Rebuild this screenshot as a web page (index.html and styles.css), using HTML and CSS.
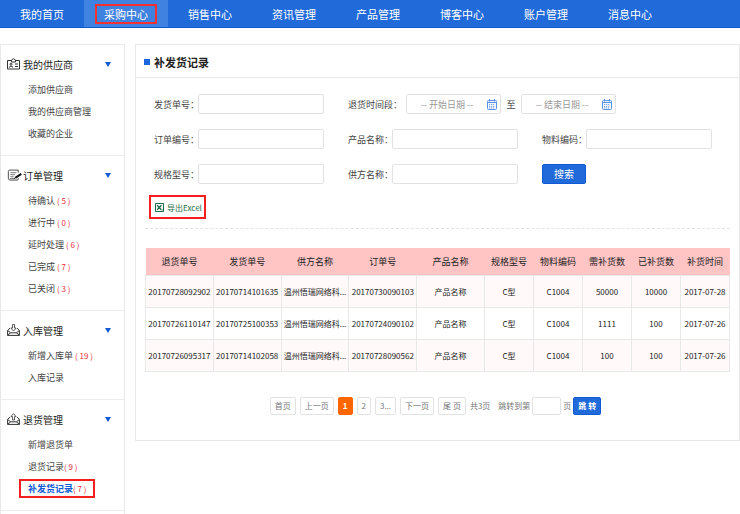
FILE: index.html
```
<!DOCTYPE html>
<html lang="zh-CN">
<head>
    <meta charset="UTF-8">
    <meta name="viewport" content="width=device-width, initial-scale=1.0">
    <title>补发货记录</title>
    <link rel="stylesheet" href="styles.css">
</head>
<body>
    <!-- Shared icons -->
    <svg class="sprite" aria-hidden="true">
        <symbol id="icon-calendar" viewBox="0 0 10 11">
            <rect x="0.5" y="1.5" width="9" height="9" rx="1" fill="#f3f8fe" stroke="#5b93e4"/>
            <path d="M0.5 3.5h9M2.5 0v2.5M7.5 0v2.5" stroke="#5b93e4" fill="none"/>
            <path d="M2 5.5h6M2 7.5h6M2 9h6" stroke="#5b93e4" stroke-width="0.8" stroke-dasharray="1.2 0.8" fill="none"/>
        </symbol>
    </svg>

    <nav class="top-nav">
        <a href="#">我的首页</a>
        <a href="#" class="active"><span class="mark">采购中心</span></a>
        <a href="#">销售中心</a>
        <a href="#">资讯管理</a>
        <a href="#">产品管理</a>
        <a href="#">博客中心</a>
        <a href="#">账户管理</a>
        <a href="#">消息中心</a>
    </nav>

    <div class="page">
        <!-- Left menu -->
        <aside class="sidebar">
            <section>
                <h3>
                    <svg class="menu-icon" viewBox="0 0 13 12" fill="none" stroke="#333">
                        <path d="M4 2.5H0.5v8.5h12V2.5H9"/>
                        <path d="M4.5 4V2L6.5 0.7 8.5 2v2z"/>
                        <circle cx="4" cy="6.2" r="1"/>
                        <path d="M2.3 9.5V8.8q1.7-1.4 3.4 0v0.7M8 6h3M8 8.5h3"/>
                    </svg>
                    我的供应商<i class="arrow"></i>
                </h3>
                <ul>
                    <li><a href="#">添加供应商</a></li>
                    <li><a href="#">我的供应商管理</a></li>
                    <li><a href="#">收藏的企业</a></li>
                </ul>
            </section>
            <section>
                <h3>
                    <svg class="menu-icon wide" viewBox="0 0 16 13" fill="none" stroke="#444">
                        <path d="M11.5 4V1.2H2.2Q0.8 1.2 0.8 2.6V10q0 2 2 2h7.5q1.2 0 1.2-1.2V10"/>
                        <path d="M3 4h6.5M3 6.2h5M3 8.4h3.5M2.5 10.4h5" stroke-width="0.8"/>
                        <path d="M8.3 9.6L14.8 5.2" stroke="#111" stroke-width="2.2"/>
                        <path d="M6.8 10.6l2-1.6" stroke="#111"/>
                    </svg>
                    订单管理<i class="arrow"></i>
                </h3>
                <ul>
                    <li><a href="#">待确认 <em>( 5 )</em></a></li>
                    <li><a href="#">进行中 <em>( 0 )</em></a></li>
                    <li><a href="#">延时处理 <em>( 6 )</em></a></li>
                    <li><a href="#">已完成 <em>( 7 )</em></a></li>
                    <li><a href="#">已关闭 <em>( 3 )</em></a></li>
                </ul>
            </section>
            <section>
                <h3>
                    <svg class="menu-icon" viewBox="0 0 13 12" fill="none" stroke="#333">
                        <path d="M3 4L0.6 6.5v4.9h11.8V6.5L10 4M0.6 6.5L3.6 8.8h5.8l3-2.3M0.6 11.2l3-2.4M12.4 11.2l-3-2.4"/>
                        <path d="M5.5 0.6h2v3.4h1.6L6.5 7 3.9 4h1.6z" stroke-width="0.8"/>
                    </svg>
                    入库管理<i class="arrow"></i>
                </h3>
                <ul>
                    <li><a href="#">新增入库单 <em>( 19 )</em></a></li>
                    <li><a href="#">入库记录</a></li>
                </ul>
            </section>
            <section>
                <h3>
                    <svg class="menu-icon" viewBox="0 0 13 12" fill="none" stroke="#333">
                        <path d="M3 4L0.6 6.5v4.9h11.8V6.5L10 4M0.6 6.5L3.6 8.8h5.8l3-2.3M0.6 11.2l3-2.4M12.4 11.2l-3-2.4"/>
                        <path d="M5.5 7h2V3.6h1.6L6.5 0.6 3.9 3.6h1.6z" stroke-width="0.8"/>
                    </svg>
                    退货管理<i class="arrow"></i>
                </h3>
                <ul>
                    <li><a href="#">新增退货单</a></li>
                    <li><a href="#">退货记录<em>( 9 )</em></a></li>
                    <li><a href="#" class="current">补发货记录<em>( 7 )</em></a></li>
                </ul>
            </section>
        </aside>

        <main class="content">
            <h1>补发货记录</h1>

            <!-- Search form -->
            <form class="search">
                <div class="field">
                    <label for="shipNo">发货单号：</label>
                    <input type="text" id="shipNo">
                </div>
                <div class="field dates">
                    <label for="dateStart">退货时间段：</label>
                    <div class="date">
                        <input type="text" id="dateStart" placeholder="-- 开始日期 --">
                        <svg><use href="#icon-calendar"/></svg>
                    </div>
                    <label for="dateEnd" class="to">至</label>
                    <div class="date">
                        <input type="text" id="dateEnd" placeholder="-- 结束日期 --">
                        <svg><use href="#icon-calendar"/></svg>
                    </div>
                </div>
                <div class="field">
                    <label for="orderNo">订单编号：</label>
                    <input type="text" id="orderNo">
                </div>
                <div class="field">
                    <label for="product">产品名称：</label>
                    <input type="text" id="product">
                </div>
                <div class="field">
                    <label for="material">物料编码：</label>
                    <input type="text" id="material">
                </div>
                <div class="field">
                    <label for="spec">规格型号：</label>
                    <input type="text" id="spec">
                </div>
                <div class="field">
                    <label for="supplier">供方名称：</label>
                    <input type="text" id="supplier">
                </div>
                <div class="field">
                    <button type="button" class="btn-search">搜索</button>
                </div>
            </form>

            <div class="toolbar">
                <a href="#" class="export">
                    <svg viewBox="0 0 9 9" fill="none" stroke="#1d6b45">
                        <path d="M0.5 0.5h8v8h-8z"/>
                        <path d="M2.2 2.2l4 4.6M6.4 2.2L2.2 6.8" stroke-width="1.3"/>
                        <path d="M6.5 7h2" stroke-width="0.8"/>
                    </svg>
                    导出Excel
                </a>
            </div>

            <!-- Records -->
            <table class="records">
                <colgroup>
                    <col span="5">
                    <col span="5" class="col-narrow">
                </colgroup>
                <thead>
                    <tr>
                        <th>退货单号</th>
                        <th>发货单号</th>
                        <th>供方名称</th>
                        <th>订单号</th>
                        <th>产品名称</th>
                        <th>规格型号</th>
                        <th>物料编码</th>
                        <th>需补货数</th>
                        <th>已补货数</th>
                        <th>补货时间</th>
                    </tr>
                </thead>
                <tbody>
                    <tr>
                        <td>20170728092902</td>
                        <td>20170714101635</td>
                        <td>温州悟瑞网络科...</td>
                        <td>20170730090103</td>
                        <td>产品名称</td>
                        <td>C型</td>
                        <td>C1004</td>
                        <td>50000</td>
                        <td>10000</td>
                        <td>2017-07-28</td>
                    </tr>
                    <tr>
                        <td>20170726110147</td>
                        <td>20170725100353</td>
                        <td>温州悟瑞网络科...</td>
                        <td>20170724090102</td>
                        <td>产品名称</td>
                        <td>C型</td>
                        <td>C1004</td>
                        <td>1111</td>
                        <td>100</td>
                        <td>2017-07-26</td>
                    </tr>
                    <tr>
                        <td>20170726095317</td>
                        <td>20170714102058</td>
                        <td>温州悟瑞网络科...</td>
                        <td>20170728090562</td>
                        <td>产品名称</td>
                        <td>C型</td>
                        <td>C1004</td>
                        <td>100</td>
                        <td>100</td>
                        <td>2017-07-26</td>
                    </tr>
                </tbody>
            </table>

            <!-- Pagination -->
            <div class="pager">
                <a href="#">首页</a>
                <a href="#">上一页</a>
                <a href="#" class="active">1</a>
                <a href="#">2</a>
                <a href="#">3...</a>
                <a href="#">下一页</a>
                <a href="#">尾 页</a>
                <span class="total">共3页</span>
                <div class="jump">
                    <label for="pageNo">跳转到第</label>
                    <input type="text" id="pageNo">
                    <span>页</span>
                    <button type="button">跳 转</button>
                </div>
            </div>
        </main>
    </div>
</body>
</html>
```

FILE: styles.css
```
* { box-sizing: border-box; }
body {
    margin: 0;
    min-height: 100vh;
    display: flex;
    flex-direction: column;
    font-family: "Noto Sans CJK SC", "Noto Sans", sans-serif;
    font-size: 9px;
    color: #444;
    background-color: #fff;
}
a { color: inherit; text-decoration: none; }
em { font-style: normal; }
input, button { font-family: inherit; }
.sprite { display: none; }

/* Top navigation */
.top-nav {
    display: flex;
    height: 28px;
    background-color: #206ad9;
    border-bottom: 1px solid #1259cf;
}
.top-nav a {
    width: 84px;
    display: flex;
    align-items: center;
    justify-content: center;
    font-size: 11px;
    color: #fff;
}
.top-nav a.active { background-color: #4082df; }
.mark {
    padding: 0 7px;
    border: 2px solid #f5302f;
    line-height: 16px;
}

.page {
    flex: 1;
    display: flex;
    align-items: flex-start;
    padding-top: 16px;
}

/* Left menu */
.sidebar {
    align-self: stretch;
    flex: 0 0 125px;
    margin-right: 10px;
    border: 1px solid #e8e8e8;
    border-bottom: 0;
}
.sidebar section {
    padding: 8px 0 11px;
    border-bottom: 1px solid #ededed;
}
.sidebar h3 {
    display: flex;
    align-items: center;
    height: 22px;
    margin: 0 0 3px;
    padding: 0 13px 0 6px;
    font-size: 10px;
    font-weight: normal;
    color: #222;
}
.menu-icon {
    flex: none;
    width: 13px;
    height: 12px;
    margin-right: 3px;
}
.menu-icon.wide { width: 16px; margin-right: 0; }
.arrow {
    margin-left: auto;
    border: 3px solid transparent;
    border-top: 5px solid #0f5bd5;
    border-bottom: 0;
}
.sidebar ul {
    list-style: none;
    margin: 0;
    padding: 0 0 0 18px;
}
.sidebar li {
    display: flex;
    align-items: center;
    height: 22px;
}
.sidebar li a {
    padding: 0 7px;
    border: 2px solid transparent;
    line-height: 15px;
    white-space: nowrap;
}
.sidebar li em { font-size: 8px; color: #e8323c; }
.sidebar li a.current {
    border-color: #f51f1f;
    font-weight: bold;
    color: #0f5bd5;
}
.sidebar li a.current em { font-weight: normal; }

/* Content panel */
.content {
    flex: 1;
    min-width: 0;
    border: 1px solid #e8e8e8;
}
.content h1 {
    display: flex;
    align-items: center;
    height: 33px;
    margin: 0;
    padding: 2px 8px 0;
    border-bottom: 1px solid #e8e8e8;
    font-size: 11px;
    color: #222;
}
.content h1::before {
    content: "";
    width: 6px;
    height: 6px;
    margin-right: 4px;
    background-color: #1b66dc;
}

/* Search form */
.search {
    display: grid;
    grid-template-columns: repeat(3, 1fr);
    row-gap: 15px;
    padding: 16px 3px 0 18px;
}
.field {
    display: flex;
    align-items: center;
    height: 20px;
    padding-right: 24px;
}
.field.dates { grid-column: span 2; }
.field label {
    flex: 0 0 44px;
    min-width: 0;
    white-space: nowrap;
}
.field.dates label { flex-basis: 58px; }
.field.dates .to {
    flex-basis: 20px;
    text-align: center;
}
.field input {
    flex: 1;
    min-width: 0;
    height: 20px;
    padding: 0 4px;
    border: 1px solid #e2e2e2;
    border-radius: 2px;
    background-color: #fff;
    font-size: 9px;
}
.field input::placeholder { color: #999; }
.date {
    display: flex;
    align-items: center;
    flex: 0 1 95px;
    min-width: 0;
    height: 20px;
    padding-right: 3px;
    border: 1px solid #e2e2e2;
    border-radius: 2px;
}
.date input {
    height: 18px;
    padding: 0;
    border: 0;
    text-align: center;
}
.date svg { flex: none; width: 10px; height: 11px; }
.btn-search {
    width: 44px;
    height: 20px;
    padding: 0;
    border: 1px solid #0f5bd5;
    border-radius: 2px;
    background-color: #206ad9;
    color: #fff;
    font-size: 10px;
    line-height: 18px;
}

.toolbar {
    display: flex;
    margin: 0 9px;
    padding: 11px 4px 9px;
    border-bottom: 1px dashed #e4e4e4;
}
.export {
    display: flex;
    align-items: center;
    height: 24px;
    padding: 0 2px 0 4px;
    border: 2px solid #f51f1f;
    font-size: 8px;
    color: #1d6b45;
}
.export svg { width: 9px; height: 9px; margin-right: 3px; }

/* Records table */
.records {
    width: calc(100% - 18px);
    margin: 19px 9px 0;
    border-collapse: collapse;
    table-layout: fixed;
}
.col-narrow { width: 49px; }
.records th {
    height: 27px;
    padding: 0;
    background-color: #ffc4c4;
    font-size: 9px;
    font-weight: normal;
    color: #222;
}
.records td {
    height: 32px;
    padding: 0;
    border: 1px solid #e8e8e8;
    font-size: 8px;
    text-align: center;
    white-space: nowrap;
    color: #222;
}
.records tbody tr:nth-child(odd) { background-color: #fff9f9; }

/* Pagination */
.pager {
    display: flex;
    align-items: center;
    justify-content: center;
    gap: 4px;
    padding: 25px 4px 25px 0;
    font-size: 8px;
    color: #777;
}
.pager a {
    height: 18px;
    padding: 0 4px;
    border: 1px solid #e2e2e2;
    border-radius: 2px;
    line-height: 16px;
}
.pager a.active {
    background-color: #ff6600;
    border-color: #ff6600;
    color: #fff;
    font-weight: bold;
}
.jump {
    display: flex;
    align-items: center;
    gap: 2px;
    margin-left: 4px;
}
.jump input {
    width: 29px;
    height: 18px;
    padding: 0 2px;
    border: 1px solid #e2e2e2;
    border-radius: 2px;
    font-size: 8px;
}
.jump button {
    height: 18px;
    padding: 0 4px;
    border: 1px solid #0f5bd5;
    border-radius: 2px;
    background-color: #206ad9;
    color: #fff;
    font-size: 8px;
    font-weight: bold;
    line-height: 16px;
}
```
